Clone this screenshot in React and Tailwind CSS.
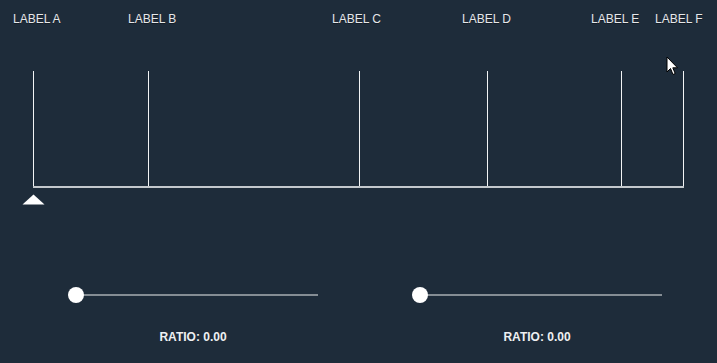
export default function App() {
  const ticks = [
    { x: 33, label: "LABEL A", lx: 13 },
    { x: 148, label: "LABEL B", lx: 128 },
    { x: 359, label: "LABEL C", lx: 332 },
    { x: 487, label: "LABEL D", lx: 462 },
    { x: 621, label: "LABEL E", lx: 591 },
    { x: 683, label: "LABEL F", lx: 655 },
  ];
  return (
    <div
      className="relative w-[717px] h-[363px] bg-[#1e2c3a] overflow-hidden"
      style={{ fontFamily: '"Liberation Sans", Arial, sans-serif' }}
    >
      <div className="relative h-[287px]">
        {ticks.map((t) => (
          <div key={t.label}>
            <div
              className="absolute top-[12px] text-[12px] leading-[14px] text-[#e6e8ea] whitespace-nowrap"
              style={{ left: t.lx, textShadow: "0 1px 0 rgba(0,0,0,0.35)" }}
            >
              {t.label}
            </div>
            <div
              className="absolute top-[71px] h-[116px] w-px bg-[#f2f4f5]"
              style={{ left: t.x }}
            />
          </div>
        ))}
        <div className="absolute left-[33px] top-[186px] w-[651px] h-[1.5px] bg-[#c3c8cc]" />
        <svg className="absolute left-[22px] top-[194px]" width="23" height="11" viewBox="0 0 23 11">
          <polygon points="11.5,0.5 22.5,10.5 0.5,10.5" fill="#ffffff" />
        </svg>
      </div>
      <div className="flex pl-[68px] gap-[94px]">
        {[0, 1].map((i) => (
          <div key={i} className="w-[250px] flex flex-col items-center">
            <div className="relative w-full h-4">
              <div className="absolute left-2 right-0 top-[7px] h-[2px] bg-[#858d94]" />
              <div className="absolute left-0 top-0 w-4 h-4 rounded-full bg-white" />
            </div>
            <div className="mt-[26px] text-[12px] leading-4 font-bold text-[#eef0f2]">
              RATIO: 0.00
            </div>
          </div>
        ))}
      </div>
      <svg className="absolute left-[666px] top-[56px]" width="14" height="20" viewBox="0 0 14 20">
        <path d="M1 1 L1 16 L4.5 12.5 L7 18.5 L9.2 17.5 L6.8 11.8 L11.5 11.8 Z" fill="#ffffff" stroke="#000000" strokeWidth="1" strokeLinejoin="round" />
      </svg>
    </div>
  );
}
